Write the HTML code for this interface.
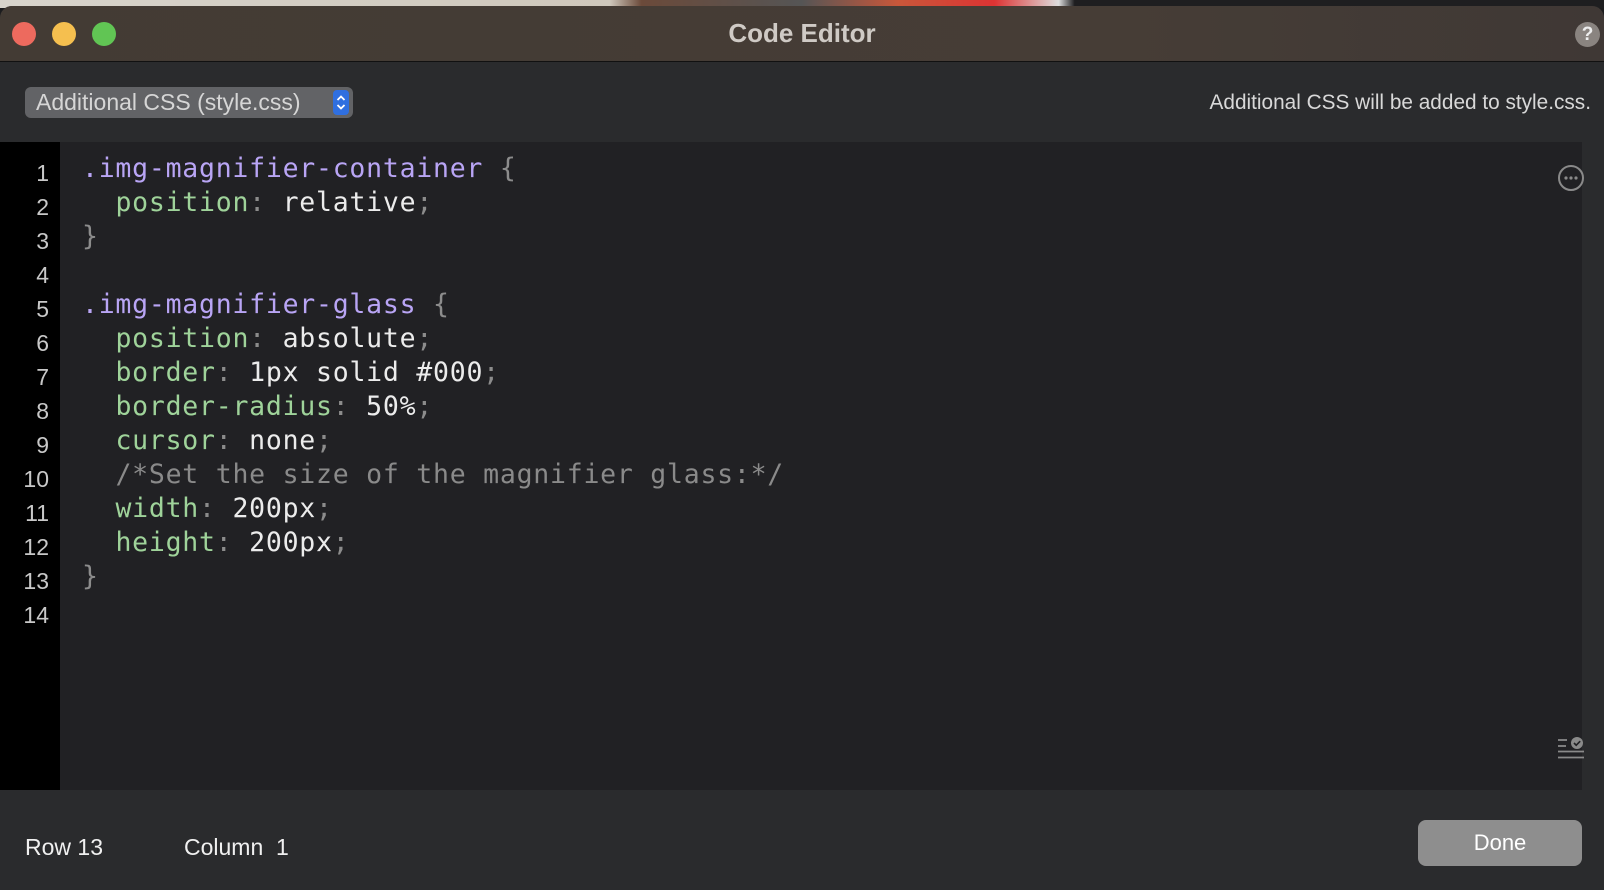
<!DOCTYPE html>
<html><head><meta charset="utf-8"><style>
*{margin:0;padding:0;box-sizing:border-box}
body{width:1604px;height:890px;overflow:hidden;background:#1c1c1e;font-family:"Liberation Sans",sans-serif;position:relative}
.top{position:absolute;left:0;top:0;width:1604px;height:8px;background:linear-gradient(90deg,#d8d4cc 0,#cfc8bc 38%,#6b4a3a 40%,#555 50%,#c9573a 56%,#d33 62%,#ddd 66%,#1e1e20 67%)}
.win{position:absolute;left:0;top:6px;width:1604px;height:884px;background:#2a2b2d;border-radius:12px 12px 0 0;overflow:hidden}
.title{height:56px;background:linear-gradient(90deg,#433b34,#463d36 70%,#3f3835);border-bottom:1px solid #111;position:relative}
.dot{position:absolute;top:16px;width:24px;height:24px;border-radius:50%}
.title h1{position:absolute;left:0;right:0;top:12px;text-align:center;font-size:26px;color:#cfcac5;font-weight:bold}
.help{position:absolute;right:4px;top:16px;width:25px;height:25px;border-radius:50%;background:#8a8480;color:#eee;font-weight:bold;font-size:19px;text-align:center;line-height:25px}
.sel{position:absolute;left:25px;top:81px;width:328px;height:31px;background:#626366;border-radius:6px;color:#d6d6d6;font-size:23px;line-height:31px;padding-left:11px}
.sel .ar{position:absolute;right:4px;top:3px;width:16px;height:25px;background:#2f6fe0;border-radius:4px}
.note{position:absolute;right:13px;top:85px;font-size:20.8px;color:#d8d8d8}
.ed{position:absolute;left:0;top:136px;width:1582px;height:648px;background:#212124}
.gut{position:absolute;left:0;top:0;width:60px;height:648px;background:#000}
.ln{position:absolute;left:0;width:49px;text-align:right;color:#c8c8c8;font-size:23px}
.cl{position:absolute;left:82px;font-family:"DejaVu Sans Mono","Liberation Mono",monospace;font-size:26.5px;color:#ececec;white-space:pre;letter-spacing:0.76px}
.s{color:#b9a5f5}.p{color:#9fd39a}.g{color:#8c8c8c}.c{color:#8a8a8a}
.bot{position:absolute;top:828px;font-size:23px;color:#f0f0f0}
.done{position:absolute;left:1418px;top:814px;width:164px;height:46px;background:#8e8e8e;border-radius:8px;color:#fff;font-size:22px;text-align:center;line-height:46px}
</style></head><body>
<div class="top"></div>
<div class="win">
<div class="title">
<div class="dot" style="left:12px;background:#ed6a5e"></div>
<div class="dot" style="left:52px;background:#f5bf4f"></div>
<div class="dot" style="left:92px;background:#61c554"></div>
<h1>Code Editor</h1>
<div class="help">?</div>
</div>
<div class="sel">Additional CSS (style.css)<div class="ar"><svg width="16" height="25"><path d="M4.5 10L8 6.5 11.5 10M4.5 15L8 18.5 11.5 15" stroke="#fff" stroke-width="1.8" fill="none"/></svg></div></div>
<div class="note">Additional CSS will be added to style.css.</div>
<div class="ed">
<div class="gut"></div>
<div class="ln" style="top:18px">1</div><div class="ln" style="top:52px">2</div><div class="ln" style="top:86px">3</div><div class="ln" style="top:120px">4</div><div class="ln" style="top:154px">5</div><div class="ln" style="top:188px">6</div><div class="ln" style="top:222px">7</div><div class="ln" style="top:256px">8</div><div class="ln" style="top:290px">9</div><div class="ln" style="top:324px">10</div><div class="ln" style="top:358px">11</div><div class="ln" style="top:392px">12</div><div class="ln" style="top:426px">13</div><div class="ln" style="top:460px">14</div>
<div class="cl" style="top:11px"><span class="s">.img-magnifier-container</span> <span class="g">{</span></div>
<div class="cl" style="top:45px">  <span class="p">position</span><span class="g">:</span> relative<span class="g">;</span></div>
<div class="cl" style="top:79px"><span class="g">}</span></div>
<div class="cl" style="top:147px"><span class="s">.img-magnifier-glass</span> <span class="g">{</span></div>
<div class="cl" style="top:181px">  <span class="p">position</span><span class="g">:</span> absolute<span class="g">;</span></div>
<div class="cl" style="top:215px">  <span class="p">border</span><span class="g">:</span> 1px solid #000<span class="g">;</span></div>
<div class="cl" style="top:249px">  <span class="p">border-radius</span><span class="g">:</span> 50%<span class="g">;</span></div>
<div class="cl" style="top:283px">  <span class="p">cursor</span><span class="g">:</span> none<span class="g">;</span></div>
<div class="cl" style="top:317px">  <span class="c">/*Set the size of the magnifier glass:*/</span></div>
<div class="cl" style="top:351px">  <span class="p">width</span><span class="g">:</span> 200px<span class="g">;</span></div>
<div class="cl" style="top:385px">  <span class="p">height</span><span class="g">:</span> 200px<span class="g">;</span></div>
<div class="cl" style="top:419px"><span class="g">}</span></div>
<svg style="position:absolute;left:1557px;top:22px" width="28" height="28"><circle cx="14" cy="14" r="12" stroke="#8a8a8a" stroke-width="2" fill="none"/><circle cx="9" cy="14" r="1.6" fill="#8a8a8a"/><circle cx="14" cy="14" r="1.6" fill="#8a8a8a"/><circle cx="19" cy="14" r="1.6" fill="#8a8a8a"/></svg>
<svg style="position:absolute;left:1557px;top:594px" width="28" height="26"><path d="M1 4h9M1 10h8M1 15.5h26M1 21.5h26" stroke="#8a8a8a" stroke-width="1.8"/><circle cx="20" cy="7" r="6" fill="#8a8a8a"/><path d="M17 7l2.2 2.2 4-4" stroke="#212124" stroke-width="1.6" fill="none"/></svg>
</div>
<div class="bot" style="left:25px">Row 13</div>
<div class="bot" style="left:184px">Column&nbsp;&nbsp;1</div>
<div class="done">Done</div>
</div>
</body></html>
